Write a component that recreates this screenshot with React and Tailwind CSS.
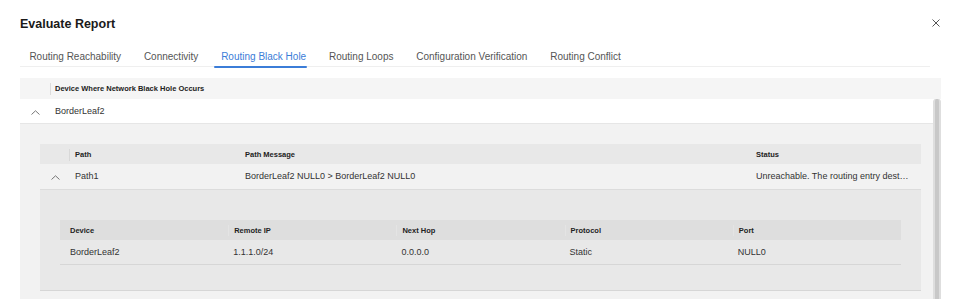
import React from 'react';

const tabs = [
  'Routing Reachability',
  'Connectivity',
  'Routing Black Hole',
  'Routing Loops',
  'Configuration Verification',
  'Routing Conflict',
];

const Chevron = () => (
  <svg width="9" height="5" viewBox="0 0 9 5" fill="none">
    <path d="M0.5 4.5 L4.5 0.8 L8.5 4.5" stroke="#666" strokeWidth="0.9" />
  </svg>
);

const Close = () => (
  <svg width="8" height="8" viewBox="0 0 8 8" fill="none">
    <path d="M0.5 0.5 L7.5 7.5 M7.5 0.5 L0.5 7.5" stroke="#555" strokeWidth="1" />
  </svg>
);

const routeCols = ['Device', 'Remote IP', 'Next Hop', 'Protocol', 'Port'];
const routeRow = ['BorderLeaf2', '1.1.1.0/24', '0.0.0.0', 'Static', 'NULL0'];

export default function App() {
  return (
    <div
      className="w-[959px] h-[299px] overflow-hidden bg-white text-[#333]"
      style={{ fontFamily: '"Liberation Sans", Arial, sans-serif' }}
    >
      {/* title */}
      <div className="h-[46px] pt-[16px] pl-[20px] pr-[19px] flex items-start justify-between">
        <h1 className="text-[12.5px] leading-[16px] font-bold text-[#1a1a1a]">Evaluate Report</h1>
        <div className="mt-[3px]">
          <Close />
        </div>
      </div>

      {/* tabs */}
      <div className="mx-[20px] w-[910px] h-[21px] border-b border-[#efefef]">
        <div className="flex h-[20px] -ml-[2px]">
          {tabs.map((t) => {
            const active = t === 'Routing Black Hole';
            return (
              <div
                key={t}
                className={
                  'relative h-full px-[11.4px] flex items-center text-[10px] whitespace-nowrap ' +
                  (active ? 'text-[#3b7dd8]' : 'text-[#555]')
                }
              >
                {t}
                {active && (
                  <span className="absolute left-[4px] right-[11px] bottom-[-2px] h-[2px] bg-[#3b7dd8] rounded-full" />
                )}
              </div>
            );
          })}
        </div>
      </div>

      {/* outer table */}
      <div className="mt-[11px] ml-[20px] w-[921px]">
        <div className="h-[21px] bg-[#f5f5f5] flex items-center pt-[1px]">
          <div className="w-[31px] h-full flex items-center justify-end">
            <span className="w-px h-[12px] bg-[#dcdcdc]" />
          </div>
          <span className="pl-[4px] text-[7.5px] font-bold text-[#222]">
            Device Where Network Black Hole Occurs
          </span>
        </div>

        <div className="flex">
          <div className="flex-1">
            <div className="h-[25px] bg-white border-b border-[#e6e6e6] flex items-center pt-[2px]">
              <div className="w-[30px] flex justify-center">
                <Chevron />
              </div>
              <span className="pl-[5px] text-[9px]">BorderLeaf2</span>
            </div>

            <div className="bg-[#f2f2f2] pt-[20px] pl-[20px] pr-[12px] pb-[20px]">
              {/* path table */}
              <div className="grid grid-cols-[30px_170px_511px_1fr] h-[20px] bg-[#e8e8e8] items-center text-[7.5px] font-bold text-[#222] pt-[1px]">
                <div className="h-full flex items-center justify-end">
                  <span className="w-px h-[12px] bg-[#d8d8d8]" />
                </div>
                <div className="pl-[5px]">Path</div>
                <div className="pl-[5px]">Path Message</div>
                <div className="pl-[5px]">Status</div>
              </div>
              <div className="grid grid-cols-[30px_170px_511px_1fr] h-[26px] border-b border-[#dcdcdc] items-center text-[9px] pt-[1px]">
                <div className="flex justify-center">
                  <Chevron />
                </div>
                <div className="pl-[5px]">Path1</div>
                <div className="pl-[5px]">BorderLeaf2 NULL0 &gt; BorderLeaf2 NULL0</div>
                <div className="pl-[5px] pr-[12px] truncate">
                  Unreachable. The routing entry destination is a black hole route.
                </div>
              </div>

              <div className="bg-[#e8e8e8] border-b border-[#d6d6d6] pt-[30px] px-[20px] pb-[25px]">
                <div className="grid grid-cols-5 h-[20px] bg-[#dedede] items-center text-[7.5px] font-bold text-[#222] pt-[1px]">
                  {routeCols.map((c, i) => (
                    <div key={c} className={i === 0 ? 'pl-[10px]' : 'pl-[5px] border-l border-[#e4e4e4]'}>
                      {c}
                    </div>
                  ))}
                </div>
                <div className="grid grid-cols-5 h-[25px] border-b border-[#d6d6d6] items-center text-[9px] pt-[2px]">
                  {routeRow.map((c, i) => (
                    <div key={i} className={i === 0 ? 'pl-[10px]' : 'pl-[5px]'}>
                      {c}
                    </div>
                  ))}
                </div>
              </div>
            </div>
          </div>

          {/* scrollbar */}
          <div className="w-[8px] h-[200px] rounded-t-[3px] border-x-2 border-[#dedede] bg-[#c8c8c8]" />
        </div>
      </div>
    </div>
  );
}
